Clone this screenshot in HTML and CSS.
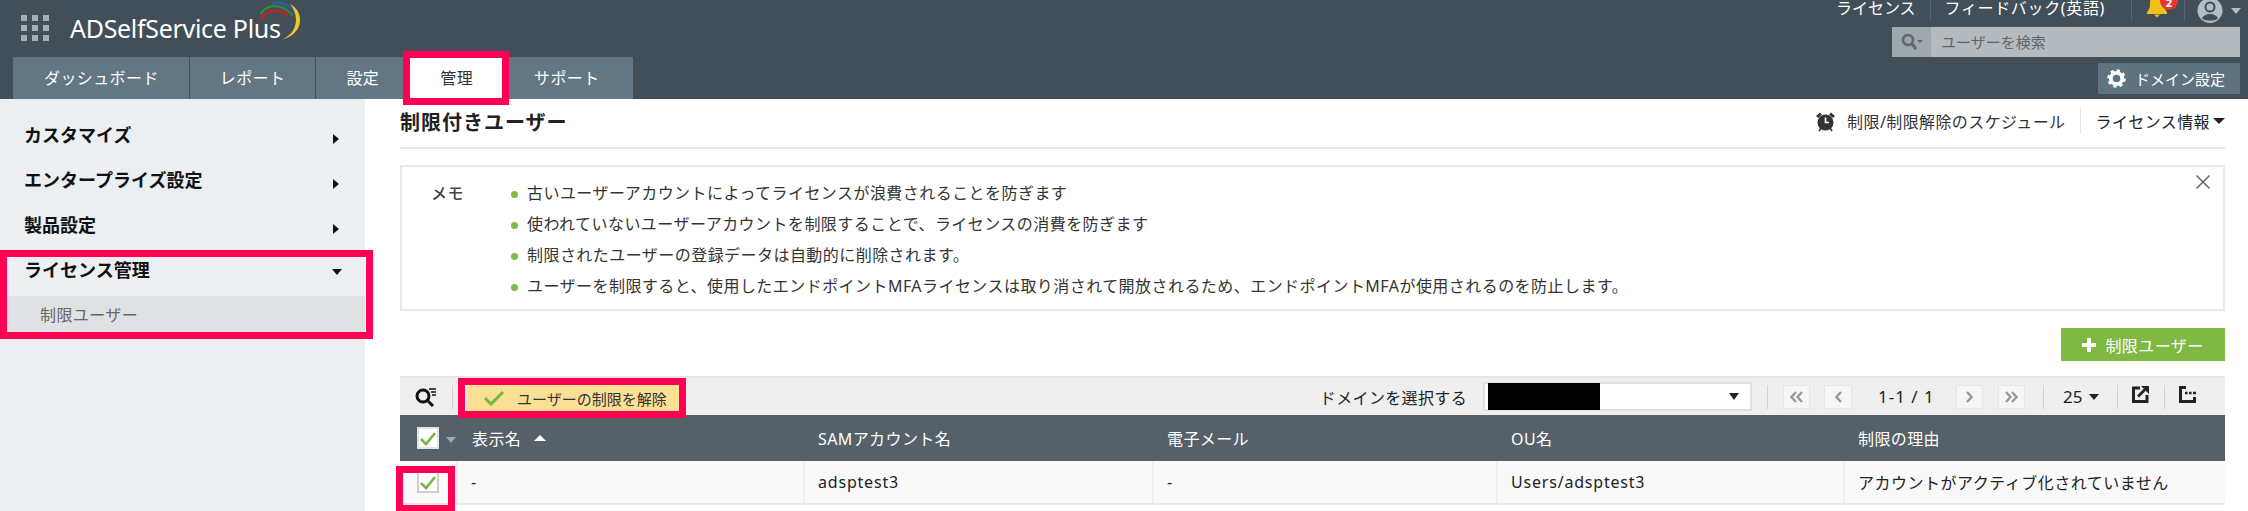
FILE: index.html
```html
<!DOCTYPE html>
<html lang="ja">
<head>
<meta charset="utf-8">
<title>ADSelfService Plus</title>
<link rel="stylesheet" href="styles.css">
</head>
<body>
<div class="page">
  <header class="topbar">
    <div class="topbar-left">
      <div class="brand">
        <svg class="apps" width="28" height="27" viewBox="0 0 28 27"><g fill="#a9aeb2"><rect x="0" y="0" width="6" height="6"/><rect x="11" y="0" width="6" height="6"/><rect x="22" y="0" width="6" height="6"/><rect x="0" y="10" width="6" height="6"/><rect x="11" y="10" width="6" height="6"/><rect x="22" y="10" width="6" height="6"/><rect x="0" y="20" width="6" height="6"/><rect x="11" y="20" width="6" height="6"/><rect x="22" y="20" width="6" height="6"/></g></svg>
        <span class="brand-name">ADSelfService Plus</span>
        <svg class="swoosh" width="80" height="50" viewBox="0 0 240 150" fill="none"><path d="M62 58C80 28 118 22 146 50" stroke="#c8202a" stroke-width="7"/><path d="M62 42C80 12 125 8 158 46" stroke="#2e8b3a" stroke-width="7"/><path d="M96 12C125 2 158 14 172 54" stroke="#2a5fa8" stroke-width="7"/><path d="M150 12C192 32 196 100 125 120C170 100 182 52 150 12Z" fill="#f2c81e"/></svg>
      </div>
      <nav class="tabs">
        <a class="tab">ダッシュボード</a>
        <a class="tab">レポート</a>
        <a class="tab">設定</a>
        <a class="tab tab-active">管理</a>
        <a class="tab">サポート</a>
      </nav>
    </div>
    <div class="topbar-right">
      <div class="utils">
        <span class="util util-license">ライセンス</span>
        <span class="util-sep"></span>
        <span class="util util-feedback">フィードバック(英語)</span>
        <span class="util-sep util-sep-wide"></span>
        <span class="bell">
          <svg width="22" height="20" viewBox="0 0 22 20"><path d="M11 -6C6 -6 4 -2 4 3C4 8 3 10 1 12V14H21V12C19 10 18 8 18 3C18 -2 16 -6 11 -6Z" fill="#efc11a"/><path d="M8 14.500H14L11 17.500Z" fill="#efc11a"/></svg>
          <span class="badge">2</span>
        </span>
        <span class="util-sep util-sep-bell"></span>
        <svg class="avatar" width="26" height="24" viewBox="0 0 26 24"><circle cx="13" cy="10.500" r="12.500" fill="#b3bdc3"/><circle cx="13" cy="7" r="4.500" fill="#b3bdc3" stroke="#434f58" stroke-width="2"/><path d="M5 18.500C7 12.500 19 12.500 21 18.500C17 21.500 9 21.500 5 18.500Z" fill="#434f58"/></svg>
        <span class="caret caret-util"></span>
      </div>
      <div class="search">
        <span class="search-icon">
          <svg width="22" height="18" viewBox="0 0 22 18" fill="none"><circle cx="7" cy="7" r="5" stroke="#5f686e" stroke-width="2.600"/><path d="M11 11L15 16" stroke="#5f686e" stroke-width="3"/><path d="M16 7H22L19 10Z" fill="#5f686e"/></svg>
        </span>
        <span class="search-text">ユーザーを検索</span>
      </div>
      <button class="domain-btn">
        <svg width="19" height="19" viewBox="0 0 20 20"><circle cx="10" cy="10" r="6" fill="none" stroke="#fff" stroke-width="4"/><circle cx="10" cy="10" r="8" fill="none" stroke="#fff" stroke-width="3.600" stroke-dasharray="3.200 3.080"/></svg>
        <span>ドメイン設定</span>
      </button>
    </div>
  </header>

  <div class="body-row">
    <aside class="sidebar">
      <div class="side-item"><span>カスタマイズ</span><i class="arrow-right"></i></div>
      <div class="side-item"><span>エンタープライズ設定</span><i class="arrow-right"></i></div>
      <div class="side-item"><span>製品設定</span><i class="arrow-right"></i></div>
      <div class="side-item"><span>ライセンス管理</span><i class="arrow-down"></i></div>
      <div class="side-sub">制限ユーザー</div>
    </aside>

    <main class="content">
      <div class="title-row">
        <h1 class="title">制限付きユーザー</h1>
        <div class="title-actions">
          <svg width="21" height="21" viewBox="0 0 21 21"><circle cx="10.500" cy="11.500" r="8" fill="#333"/><path d="M10.500 6.500V11.500H14" stroke="#fff" stroke-width="1.600" fill="none"/><path d="M1 5L5 1.500L7 3.500L3 7ZM20 5L16 1.500L14 3.500L18 7Z" fill="#333"/><path d="M4 20L6 17M17 20L15 17" stroke="#333" stroke-width="1.600"/></svg>
          <span class="schedule">制限/制限解除のスケジュール</span>
          <span class="action-sep"></span>
          <span class="license-info">ライセンス情報</span>
          <span class="caret caret-dark"></span>
        </div>
      </div>

      <section class="memo">
        <div class="memo-label">メモ</div>
        <ul class="memo-list">
          <li>古いユーザーアカウントによってライセンスが浪費されることを防ぎます</li>
          <li>使われていないユーザーアカウントを制限することで、ライセンスの消費を防ぎます</li>
          <li>制限されたユーザーの登録データは自動的に削除されます。</li>
          <li>ユーザーを制限すると、使用したエンドポイントMFAライセンスは取り消されて開放されるため、エンドポイントMFAが使用されるのを防止します。</li>
        </ul>
        <svg class="memo-close" width="16" height="16" viewBox="0 0 16 16"><path d="M1.500 1.500L14.500 14.500M14.500 1.500L1.500 14.500" stroke="#666" stroke-width="1.500"/></svg>
      </section>

      <div class="add-row">
        <button class="add-btn"><svg width="14" height="14" viewBox="0 0 14 14"><path d="M5 0H9V5H14V9H9V14H5V9H0V5H5Z" fill="#fff"/></svg><span>制限ユーザー</span></button>
      </div>

      <div class="toolbar">
        <svg class="tool-search" width="22" height="20" viewBox="0 0 22 20" fill="none"><circle cx="8" cy="9" r="6" stroke="#111" stroke-width="3"/><path d="M12.500 13.500L18 19" stroke="#111" stroke-width="3"/><path d="M14 2H21M16 5H21M17 8H21" stroke="#111" stroke-width="1.400"/></svg>
        <span class="tool-sep tool-sep-a"></span>
        <button class="unrestrict">
          <svg width="22" height="16" viewBox="0 0 22 16" fill="none"><path d="M2 8L8 14L20 2" stroke="#76b83f" stroke-width="3"/></svg>
          <span>ユーザーの制限を解除</span>
        </button>
        <span class="domain-label">ドメインを選択する</span>
        <div class="domain-select"><span class="redacted"></span><span class="caret caret-select"></span></div>
        <span class="tool-sep tool-sep-b"></span>
        <button class="page-btn page-first" aria-label="最初"><svg width="13" height="12" viewBox="0 0 13 12" fill="none"><path d="M6 1L1.500 6L6 11M12 1L7.500 6L12 11" stroke="#999" stroke-width="2.400"/></svg></button>
        <button class="page-btn page-prev" aria-label="前"><svg width="7" height="12" viewBox="0 0 7 12" fill="none"><path d="M6 1L1.500 6L6 11" stroke="#999" stroke-width="2.400"/></svg></button>
        <span class="page-count">1-1 / 1</span>
        <button class="page-btn page-next" aria-label="次"><svg width="7" height="12" viewBox="0 0 7 12" fill="none"><path d="M1 1L5.500 6L1 11" stroke="#999" stroke-width="2.400"/></svg></button>
        <button class="page-btn page-last" aria-label="最後"><svg width="13" height="12" viewBox="0 0 13 12" fill="none"><path d="M1 1L5.500 6L1 11M7 1L11.500 6L7 11" stroke="#999" stroke-width="2.400"/></svg></button>
        <span class="tool-sep tool-sep-c"></span>
        <span class="per-page">25</span>
        <span class="caret caret-dark caret-small"></span>
        <span class="tool-sep tool-sep-d"></span>
        <svg class="tool-export" width="17" height="17" viewBox="0 0 17 17" fill="none"><path d="M8 2H1.500V15.500H15V9" stroke="#222" stroke-width="3"/><path d="M6 10.500L13 3.500" stroke="#222" stroke-width="2.600"/><path d="M9 0H17V8Z" fill="#222"/></svg>
        <span class="tool-sep tool-sep-e"></span>
        <svg class="tool-cols" width="17" height="17" viewBox="0 0 17 17" fill="none"><path d="M1.500 0V15.500H17" stroke="#222" stroke-width="3"/><path d="M1.500 1.500H7" stroke="#222" stroke-width="3"/><path d="M6 7H8.500M10 7H12.500M14 7H17" stroke="#222" stroke-width="2.600"/><path d="M15.500 11V15" stroke="#222" stroke-width="3"/></svg>
      </div>

      <div class="table">
        <div class="thead">
          <div class="cell cell-check">
            <span class="checkbox checkbox-head"><svg width="18" height="15" viewBox="0 0 18 15" fill="none"><path d="M2 8L7 13L16 2" stroke="#76b83f" stroke-width="2.600"/></svg></span>
            <span class="caret caret-head"></span>
          </div>
          <div class="cell cell-name">表示名<span class="sort-up"></span></div>
          <div class="cell">SAMアカウント名</div>
          <div class="cell">電子メール</div>
          <div class="cell">OU名</div>
          <div class="cell">制限の理由</div>
        </div>
        <div class="trow">
          <div class="cell cell-check">
            <span class="checkbox"><svg width="18" height="15" viewBox="0 0 18 15" fill="none"><path d="M2 8L7 13L16 2" stroke="#76b83f" stroke-width="2.600"/></svg></span>
          </div>
          <div class="cell">-</div>
          <div class="cell cell-latin">adsptest3</div>
          <div class="cell">-</div>
          <div class="cell cell-latin">Users/adsptest3</div>
          <div class="cell cell-reason">アカウントがアクティブ化されていません</div>
        </div>
      </div>
    </main>
  </div>

  <div class="mark mark-tab"></div>
  <div class="mark mark-side"></div>
  <div class="mark mark-btn"></div>
  <div class="mark mark-check"></div>
</div>
</body>
</html>
```

FILE: styles.css
```css
* { box-sizing: border-box; }
html, body { margin: 0; padding: 0; }
body {
  width: 2248px;
  height: 511px;
  overflow: hidden;
  background: #fff;
  color: #222;
  font-family: "Noto Sans", "Noto Sans CJK JP", sans-serif;
  font-size: 16px;
  letter-spacing: 0.4px;
}
button { font-family: inherit; font-size: 16px; border: 0; padding: 0; letter-spacing: inherit; }
.page { position: relative; width: 2248px; height: 511px; overflow: hidden; }

/* top bar */
.topbar {
  height: 99px;
  background: #434f58;
  display: flex;
  justify-content: space-between;
}
.brand {
  position: relative;
  height: 57px;
  display: flex;
  align-items: flex-start;
  padding: 15px 0 0 21px;
}
.brand-name {
  margin-left: 21px;
  margin-top: -2px;
  font-size: 25px;
  line-height: 30px;
  color: #fff;
  white-space: nowrap;
  letter-spacing: -0.3px;
}
.swoosh { position: absolute; left: 240px; top: 0; }
.tabs { display: flex; gap: 1px; padding-left: 13px; height: 42px; }
.tab {
  display: flex;
  align-items: center;
  padding: 0 30px;
  background: #627684;
  color: #fff;
  line-height: 1;
}
.tab:first-child { padding-left: 31px; }
.tab:last-child { padding-right: 33px; }
.tab-active { background: #fff; color: #333; }

.topbar-right {
  display: flex;
  flex-direction: column;
  align-items: flex-end;
  padding-right: 8px;
}
.utils {
  height: 27px;
  display: flex;
  align-items: flex-start;
  color: #fff;
}
.util { font-size: 16px; line-height: 17px; white-space: nowrap; }
.util-license { letter-spacing: 0; }
.util-feedback { letter-spacing: 0.650px; }
.util-sep { width: 1px; height: 21px; background: #566570; margin: 0 14px; }
.util-sep-wide { margin: 0 14px 0 26px; }
.util-sep-bell { margin: 0 12px 0 16px; }
.bell { position: relative; width: 22px; height: 20px; display: block; }
.bell svg { display: block; }
.badge {
  position: absolute;
  left: 14px;
  top: -8px;
  width: 18px;
  height: 18px;
  border-radius: 50%;
  background: #e8372f;
  color: #fff;
  font-size: 11px;
  font-weight: 700;
  line-height: 22px;
  text-align: center;
  letter-spacing: 0;
}
.avatar { display: block; }
.caret { display: inline-block; width: 0; height: 0; border-style: solid; border-color: transparent; flex: none; }
.caret-util { border-width: 6px 5px 0; border-top-color: #b5bbbf; margin: 8px -1px 0 8px; }

.search { width: 348px; height: 30px; display: flex; background: #b4babe; }
.search-icon {
  width: 39px;
  background: #9ea8ad;
  display: flex;
  align-items: center;
  justify-content: center;
}
.search-text { padding-left: 10px; font-size: 15px; line-height: 30px; color: #5f666b; letter-spacing: 0; }
.domain-btn {
  margin-top: 6px;
  width: 142px;
  height: 31px;
  background: #5f7280;
  color: #fff;
  display: flex;
  align-items: center;
  gap: 9px;
  padding-left: 9px;
  font-size: 15px;
  letter-spacing: 0;
}

/* main */
.body-row { display: flex; height: 412px; }
.sidebar { width: 365px; background: #ebeff1; padding-top: 12px; flex: none; }
.side-item {
  height: 45px;
  padding: 0 26px 0 24px;
  display: flex;
  align-items: center;
  justify-content: space-between;
  font-size: 18px;
  font-weight: 700;
  color: #111;
  letter-spacing: 0;
}
.arrow-right {
  width: 0; height: 0;
  margin: 10px 0 0;
  border-style: solid;
  border-width: 5px 0 5px 6px;
  border-color: transparent transparent transparent #111;
}
.arrow-down {
  width: 0; height: 0;
  margin: 6px -3px 0 0;
  border-style: solid;
  border-width: 6px 5.500px 0;
  border-color: #111 transparent transparent;
}
.side-sub {
  margin-top: 5px;
  height: 36px;
  padding-left: 40px;
  background: #e0e1e3;
  color: #666;
  line-height: 38px;
}

.content { width: 1825px; margin-left: 35px; flex: none; }
.title-row {
  height: 50px;
  border-bottom: 2px solid #e6e6e6;
  display: flex;
  align-items: center;
  justify-content: space-between;
}
.title { margin: 0; font-size: 20px; font-weight: 700; letter-spacing: 1px; color: #222; padding-bottom: 4px; }
.title-actions { display: flex; align-items: center; padding-bottom: 4px; }
.schedule { margin-left: 11px; color: #333; }
.action-sep { width: 1px; height: 26px; background: #e6e6e6; margin: 0 15px 0 14px; }
.license-info { color: #222; }
.caret-dark { border-width: 6px 6px 0; border-top-color: #222; margin-left: 3px; }

.memo {
  position: relative;
  margin-top: 16px;
  height: 146px;
  border: 2px solid #e9e9e9;
  padding: 11px 0 0 29px;
  display: flex;
}
.memo-label { width: 80px; line-height: 31px; font-weight: 500; color: #444; flex: none; }
.memo-list { list-style: none; margin: 0; padding: 0; color: #333; line-height: 31px; letter-spacing: 0.450px; }
.memo-list li { position: relative; padding-left: 16px; }
.memo-list li::before {
  content: "";
  position: absolute;
  left: 0;
  top: 13px;
  width: 7px;
  height: 7px;
  border-radius: 50%;
  background: #7dba47;
}
.memo-close { position: absolute; right: 12px; top: 7px; }

.add-row { margin-top: 17px; display: flex; justify-content: flex-end; }
.add-btn {
  width: 164px;
  height: 33px;
  background: #7fb944;
  color: #fff;
  display: flex;
  align-items: center;
  justify-content: center;
  gap: 9px;
}

.toolbar {
  margin-top: 15px;
  height: 39px;
  background: #efefef;
  border-top: 2px solid #e5e5e5;
  display: flex;
  align-items: center;
}
.tool-search { margin-left: 15px; flex: none; }
.tool-sep { width: 1px; height: 24px; background: #d2d2d2; flex: none; }
.tool-sep-a { margin-left: 15px; }
.unrestrict {
  margin-left: 14px;
  width: 213px;
  height: 26px;
  margin-top: 3px;
  background: #fbdf94;
  color: #333;
  display: flex;
  align-items: center;
  gap: 12px;
  padding-left: 16px;
  font-size: 15px;
  letter-spacing: 0;
}
.domain-label { margin-left: auto; color: #222; letter-spacing: 0.350px; }
.domain-select {
  margin-left: 16px;
  width: 269px;
  height: 29px;
  background: #fff;
  border: 2px solid #e1e1e1;
  display: flex;
  align-items: center;
  justify-content: space-between;
  padding: 0 11px 0 3px;
}
.redacted { width: 112px; height: 27px; background: #000; }
.caret-select { border-width: 7px 5px 0; border-top-color: #222; }
.tool-sep-b { margin-left: 15px; }
.page-btn {
  width: 27px;
  height: 24px;
  background: #f6f6f6;
  border: 1px solid #e6e6e6;
  display: flex;
  align-items: center;
  justify-content: center;
  flex: none;
}
.page-first { margin-left: 15px; }
.page-prev { margin-left: 14px; width: 28px; }
.page-count { margin: 0 22px 0 26px; white-space: nowrap; width: 56px; font-size: 17px; letter-spacing: 1px; flex: none; }
.page-last { margin-left: 15px; }
.tool-sep-c { margin-left: 18px; }
.per-page { margin-left: 19px; width: 20px; font-size: 17px; letter-spacing: 0; flex: none; }
.caret-small { border-width: 6px 5.500px 0; margin-left: 6px; }
.tool-sep-d { margin-left: 18px; }
.tool-export { margin-left: 14px; margin-top: -5px; flex: none; }
.tool-sep-e { margin-left: 15px; }
.tool-cols { margin-left: 14px; margin-top: -5px; margin-right: 29px; flex: none; }

.thead, .trow {
  display: grid;
  grid-template-columns: 56px 347px 349px 344px 347px 382px;
}
.thead { height: 46px; background: #566068; color: #fff; }
.trow { height: 44px; background: #f9f9f9; border-bottom: 2px solid #e8e8e8; color: #222; }
.cell {
  display: flex;
  align-items: center;
  padding-left: 15px;
  white-space: nowrap;
}
.trow .cell + .cell { border-left: 2px solid #efefef; padding-left: 13px; }
.cell-latin { letter-spacing: 0.800px; }
.cell-reason { letter-spacing: 0.500px; }
.thead .cell-name { padding-left: 16px; }
.cell-check { padding-left: 17px; }
.checkbox {
  width: 22px;
  height: 22px;
  background: #fff;
  border: 2px solid #cfcfcf;
  display: flex;
  align-items: center;
  justify-content: center;
  flex: none;
}
.checkbox-head { border-color: #e3e3e3; }
.caret-head { border-width: 6px 5.500px 0; border-top-color: #a3a8ac; margin: 3px 0 0 7px; }
.sort-up {
  width: 0; height: 0;
  margin-left: 13px;
  border-style: solid;
  border-width: 0 6px 6px;
  border-color: transparent transparent #fff;
}

/* red annotation frames drawn over the screenshot */
.mark { position: absolute; border: 7px solid #ff0052; pointer-events: none; }
.mark-tab { left: 403px; top: 51px; width: 106px; height: 54px; }
.mark-side { left: 0; top: 250px; width: 373px; height: 89px; }
.mark-btn { left: 458px; top: 378px; width: 228px; height: 40px; }
.mark-check { left: 396px; top: 466px; width: 59px; height: 46px; }
```
